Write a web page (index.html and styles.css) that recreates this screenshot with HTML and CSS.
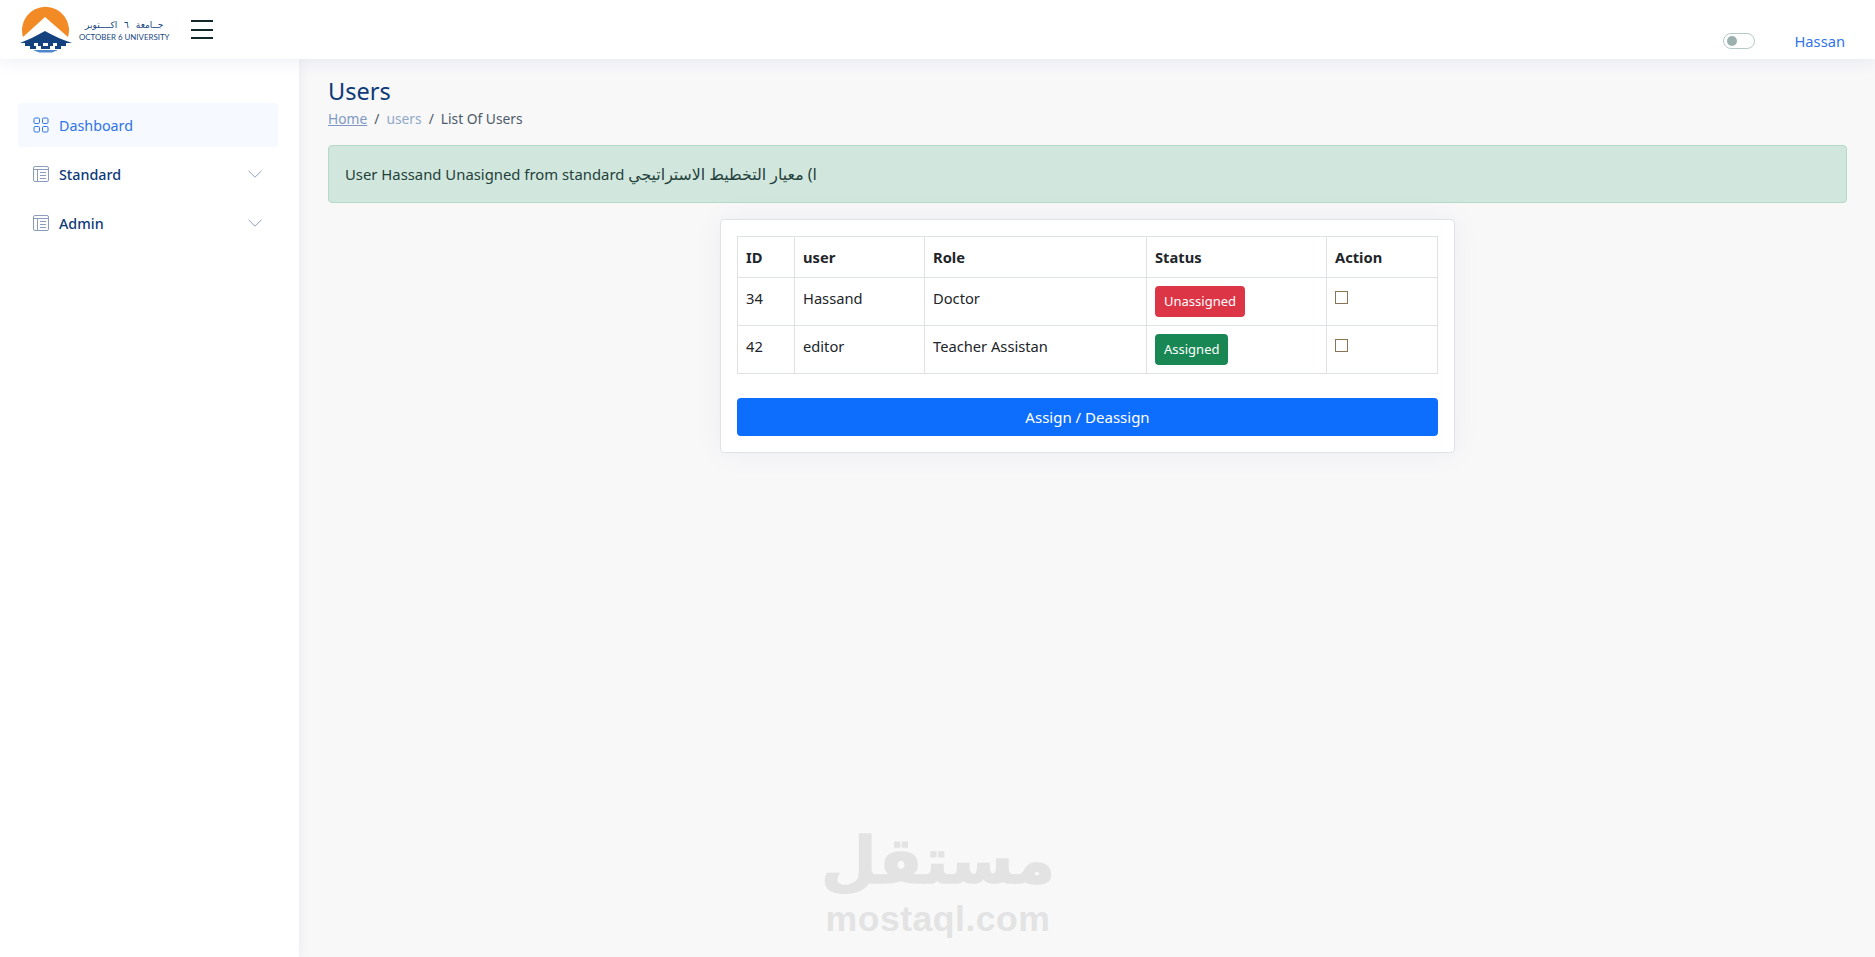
FILE: index.html
```html
<!DOCTYPE html>
<html lang="en">
	<head>
		<meta charset="UTF-8">
		<title>Users</title>
		<link rel="stylesheet" href="styles.css">
	</head>
	<body>
		<header class="topbar">
			<a class="logo" href="#">
				<svg class="logo-mark" width="54" height="47" viewBox="0 0 54 47">
					<path fill="#f28a26" d="M4 31 A23.500 23.500 0 1 1 49 31 L26 11 Z"/>
					<path fill="#14427f" d="M26 25 Q38 32 53 37 L1 37 Q14 32 26 25 Z"/>
					<path fill="#14427f" d="M6 37 H47 V40 H42 V43 H36 V40 H31 V43 H22 V40 H17 V43 H11 V40 H6 Z"/>
					<path fill="#fff" d="M15 37 h4 v3 h-4z M24 37 h5 v3 h-5z M34 37 h4 v3 h-4z"/>
					<path fill="#4d86c9" d="M14 44 H39 L33 46.500 H20 Z"/>
				</svg>
				<span class="logo-text">
					<span class="logo-ar" dir="rtl" lang="ar">جــامعة ٦ اكــــتوبر</span>
					<span class="logo-en">OCTOBER 6 UNIVERSITY</span>
				</span>
			</a>
			<button class="burger" aria-label="menu"><i></i><i></i><i></i></button>
			<div class="topbar-right">
				<span class="toggle"><b></b></span>
				<a class="user" href="#">Hassan</a>
			</div>
		</header>

		<div class="layout">
			<aside class="sidebar">
				<ul class="side-nav">
					<li class="side-item active">
						<svg class="side-icon" width="16" height="16" viewBox="0 0 16 16" fill="none" stroke="currentColor">
							<rect x="1" y="1" width="5.500" height="5.500" rx="1.200"/>
							<rect x="9.500" y="1" width="5.500" height="5.500" rx="1.200"/>
							<rect x="1" y="9.500" width="5.500" height="5.500" rx="1.200"/>
							<rect x="9.500" y="9.500" width="5.500" height="5.500" rx="1.200"/>
						</svg>
						<span>Dashboard</span>
					</li>
					<li class="side-item">
						<svg class="side-icon" width="16" height="16" viewBox="0 0 16 16" fill="none" stroke="currentColor">
							<rect x="0.500" y="0.500" width="15" height="15" rx="1.500"/>
							<path d="M0.500 3.500 H15.500 M4.500 3.500 V15.500 M7 6.500 H13 M7 9.500 H13 M7 12.500 H13"/>
						</svg>
						<span>Standard</span>
						<svg class="side-chevron" width="16" height="16" viewBox="0 0 16 16" fill="none" stroke="currentColor">
							<path d="M1.500 4.800 L8 11.200 L14.500 4.800"/>
						</svg>
					</li>
					<li class="side-item">
						<svg class="side-icon" width="16" height="16" viewBox="0 0 16 16" fill="none" stroke="currentColor">
							<rect x="0.500" y="0.500" width="15" height="15" rx="1.500"/>
							<path d="M0.500 3.500 H15.500 M4.500 3.500 V15.500 M7 6.500 H13 M7 9.500 H13 M7 12.500 H13"/>
						</svg>
						<span>Admin</span>
						<svg class="side-chevron" width="16" height="16" viewBox="0 0 16 16" fill="none" stroke="currentColor">
							<path d="M1.500 4.800 L8 11.200 L14.500 4.800"/>
						</svg>
					</li>
				</ul>
			</aside>

			<main class="content">
				<h1 class="page-title">Users</h1>
				<ol class="crumbs">
					<li><a href="#">Home</a></li>
					<li class="crumb-muted">users</li>
					<li class="crumb-current">List Of Users</li>
				</ol>

				<div class="alert"><span>User Hassand Unasigned from standard <span class="alert-ar">ا) معيار التخطيط الاستراتيجي</span></span></div>

				<section class="card">
					<table class="users">
						<thead>
							<tr>
								<th class="col-id">ID</th>
								<th class="col-user">user</th>
								<th class="col-role">Role</th>
								<th class="col-status">Status</th>
								<th>Action</th>
							</tr>
						</thead>
						<tbody>
							<tr>
								<td>34</td>
								<td>Hassand</td>
								<td>Doctor</td>
								<td><span class="tag tag-red">Unassigned</span></td>
								<td><span class="check"></span></td>
							</tr>
							<tr>
								<td>42</td>
								<td>editor</td>
								<td>Teacher Assistan</td>
								<td><span class="tag tag-green">Assigned</span></td>
								<td><span class="check"></span></td>
							</tr>
						</tbody>
					</table>
					<button class="btn-assign">Assign / Deassign</button>
				</section>
			</main>
		</div>

		<div class="watermark">
			<div class="wm-ar" lang="ar" dir="rtl">مستقل</div>
			<div class="wm-en">mostaql.com</div>
		</div>
	</body>
</html>
```

FILE: styles.css
```css
* { box-sizing: border-box; }
html, body { height: 100%; }
body {
	margin: 0;
	background: #f8f8f9;
	color: #212529;
	font-family: "Noto Sans", "DejaVu Sans", sans-serif;
	font-size: 14.700px;
	overflow: hidden;
}
a { text-decoration: none; }

.topbar {
	height: 59px;
	display: flex;
	align-items: flex-start;
	background: #fff;
	box-shadow: 0 2px 16px rgba(1, 41, 112, 0.08);
	position: relative;
	z-index: 2;
}
.logo {
	display: flex;
	align-items: flex-start;
	height: 59px;
	padding: 6px 0 0 19px;
	width: 191px;
	flex: none;
}
.logo-mark { flex: none; }
.logo-text {
	display: flex;
	flex-direction: column;
	margin-left: 6px;
	margin-top: 14px;
	color: #14467f;
	line-height: 10px;
}
.logo-ar { font-family: "DejaVu Sans", sans-serif; font-size: 9px; white-space: nowrap; text-align: center; word-spacing: 4px; }
.logo-en { font-family: "Lato", sans-serif; font-size: 7.900px; margin-top: 2px; white-space: nowrap; }

.burger {
	width: 22px;
	margin-top: 20px;
	padding: 0;
	border: 0;
	background: none;
	display: flex;
	flex-direction: column;
	gap: 6.500px;
}
.burger i { display: block; height: 2px; background: #12282b; }

.topbar-right {
	margin-left: auto;
	display: flex;
	align-items: center;
	padding: 31px 30px 0 0;
}
.toggle {
	width: 32px;
	height: 16px;
	border: 1px solid #b5cbc8;
	border-radius: 8px;
	display: flex;
	align-items: center;
	padding-left: 3px;
	margin-right: 39px;
}
.toggle b { width: 10px; height: 10px; border-radius: 50%; background: #9db0b0; }
.user { color: #2f74e8; line-height: 20px; }

.layout {
	display: flex;
	height: calc(100% - 59px);
}
.sidebar {
	width: 299px;
	flex: none;
	background: #fff;
	padding: 44px 21px 0 18px;
	box-shadow: 0 0 12px rgba(1, 41, 112, 0.07);
}
.side-nav { list-style: none; margin: 0; padding: 0; display: flex; flex-direction: column; gap: 5px; }
.side-item {
	height: 44px;
	display: flex;
	align-items: center;
	padding: 0 15px 0 15px;
	border-radius: 4px;
	color: #0e3a78;
	font-size: 14.300px;
	font-weight: 500;
}
.side-item .side-icon { color: #8c9cc0; margin-right: 10px; flex: none; }
.side-chevron { margin-left: auto; color: #93a0bd; }
.side-item.active { background: #f6f9ff; color: #2f74e8; font-weight: 400; }
.side-item.active .side-icon { color: #2f74e8; }

.content {
	flex: 1;
	padding: 18px 28px 0 29px;
	min-width: 0;
}
.page-title {
	margin: 0;
	font-size: 23.500px;
	font-weight: 400;
	line-height: 29px;
	color: #0e3a78;
}
.crumbs {
	list-style: none;
	display: flex;
	margin: 3px 0 0;
	padding: 0;
	font-size: 13.800px;
	line-height: 20px;
	color: #4d5a6a;
}
.crumbs li + li::before { content: "/"; margin: 0 7px; color: #4d5a6a; }
.crumbs a { color: #8099c2; text-decoration: underline; }
.crumb-muted { color: #92a8c8; }
.crumb-current { color: #4d5a6a; }

.alert {
	margin-top: 16px;
	height: 58px;
	padding: 0 16px;
	display: flex;
	align-items: center;
	background: #d1e7dd;
	border: 1px solid #b5d8c8;
	border-radius: 4px;
	color: #24403a;
	font-size: 14.850px;
}
.alert-ar { font-size: 15.800px; }

.card {
	width: 735px;
	margin: 16px auto 0;
	padding: 16px;
	background: #fff;
	border: 1px solid #dfe2e6;
	border-radius: 4px;
	box-shadow: 0 0 30px rgba(1, 41, 112, 0.05);
}
.users {
	width: 701px;
	table-layout: fixed;
	border-collapse: collapse;
}
.users th, .users td {
	border: 1px solid #dee2e6;
	padding: 8px;
	text-align: left;
	vertical-align: top;
	line-height: 24px;
	color: #212529;
}
.users th { font-weight: 700; height: 41px; }
.users td { height: 48px; }
.col-id { width: 57px; }
.col-user { width: 130px; }
.col-role { width: 222px; }
.col-status { width: 180px; }

.tag {
	display: inline-block;
	padding: 0 9px;
	height: 31px;
	line-height: 31px;
	border-radius: 4px;
	color: #fff;
	font-size: 13px;
}
.tag-red { background: #dc3545; }
.tag-green { background: #198754; }
.check {
	display: block;
	width: 13px;
	height: 13px;
	margin-top: 5px;
	border: 1px solid #8b7355;
	background: #fff;
}
.btn-assign {
	display: block;
	width: 701px;
	height: 38px;
	margin-top: 24px;
	border: 0;
	border-radius: 4px;
	background: #0d6efd;
	color: #fff;
	font-family: inherit;
	font-size: 15px;
}

.watermark {
	position: absolute;
	left: 798px;
	top: 822px;
	width: 280px;
	text-align: center;
	color: #e3e3e3;
	font-weight: 700;
}
.wm-ar { font-family: "DejaVu Sans", sans-serif; font-size: 64px; line-height: 78px; -webkit-text-stroke: 1.500px #e3e3e3; }
.wm-en { font-family: "Liberation Sans", sans-serif; font-size: 35.600px; line-height: 38px; letter-spacing: 0.500px; }
```
